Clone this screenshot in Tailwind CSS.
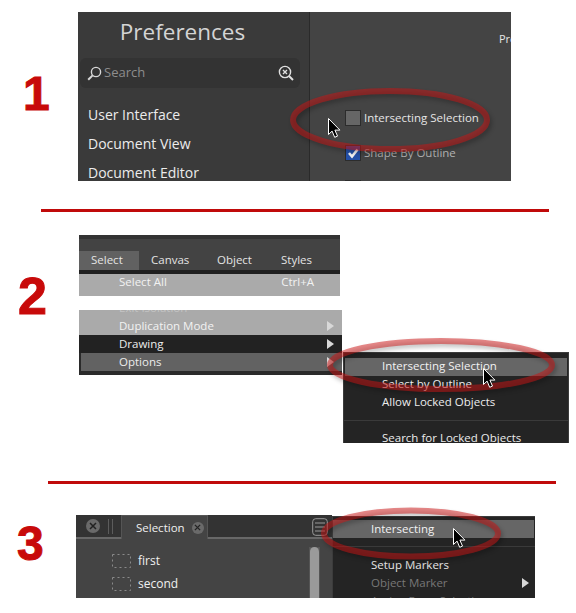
<!DOCTYPE html>
<html>
<head>
<meta charset="utf-8">
<script src="https://cdn.jsdelivr.net/npm/@tailwindcss/browser@4"></script>
</head>
<body class="bg-white">
<div class="relative w-[576px] h-[613px] overflow-hidden bg-white font-['Open_Sans','Noto_Sans',sans-serif]">

  <!-- Section 1 -->
  <section class="flex pt-[12px] h-[181px]">
    <div class="w-[78px] pt-[54px] pl-[23px] text-[#c80a0a] font-['Liberation_Sans',sans-serif] font-bold text-[48px] leading-[56px] [-webkit-text-stroke:1px_#c80a0a]">1</div>
    <div class="flex w-[433px] h-[169px] overflow-hidden bg-[#444444]">
      <div class="w-[232px] shrink-0 bg-[#3a3a3a] border-r border-[#2a2a2a] pl-[2px] pr-[9px]">
        <div class="h-[46px] flex items-start justify-center pt-[4px] pr-[15px] text-[22.5px] leading-[32px] text-[#d4d4d4]">Preferences</div>
        <div class="h-[30px] rounded-md bg-[#333333] flex items-center pl-[7px] pr-[6px]">
          <svg class="w-[15px] h-[15px] shrink-0" viewBox="0 0 15 15" fill="none" stroke="#d8d8d8" stroke-width="1.4"><circle cx="9" cy="6" r="4.6"/><path d="M5.6 9.4 1.2 13.8" stroke-width="2"/></svg>
          <span class="ml-[2px] text-[13px] text-[#8d8d8d]">Search</span>
          <svg class="ml-auto w-[16px] h-[16px]" viewBox="0 0 16 16" fill="none" stroke="#e0e0e0" stroke-width="1.4"><circle cx="7" cy="7" r="5.6"/><path d="M11 11 15 15" stroke-width="2"/><path d="M5 5 9 9M9 5 5 9"/></svg>
        </div>
        <ul class="mt-[12px] pl-[8px] text-[14px] text-[#ececec] leading-[29px]">
          <li>User Interface</li>
          <li>Document View</li>
          <li>Document Editor</li>
        </ul>
      </div>
      <div class="flex-1 relative pl-[35px] pt-[98px]">
        <div class="flex items-center gap-[3px] h-[16px] text-[11.5px] text-[#e6e6e6]">
          <span class="w-[16px] h-[16px] bg-[#666666] border border-[#2c2c2c]"></span>
          <span>Intersecting Selection</span>
        </div>
        <div class="flex items-center gap-[3px] h-[16px] mt-[19px] text-[11.5px] text-[#b5b5b5]">
          <span class="w-[16px] h-[16px] bg-[#2450a8] border border-[#2c2c2c] flex items-center justify-center">
            <svg class="w-[12px] h-[12px]" viewBox="0 0 12 12" fill="none" stroke="#f2f2f2" stroke-width="2.6"><path d="M2 6 5 9.5 10.5 2.5"/></svg>
          </span>
          <span>Shape By Outline</span>
        </div>
        <div class="w-[16px] h-[16px] mt-[19px] bg-[#333333] border border-[#2c2c2c]"></div>
        <span class="absolute left-[189px] top-[19px] text-[11px] text-[#e6e6e6] w-[12px] overflow-hidden">Pre</span>
      </div>
    </div>
  </section>

  <div class="ml-[41px] mt-[28px] w-[508px] h-[3px] bg-[#c00a0a]"></div>

  <!-- Section 2 -->
  <section class="flex mt-[23px] h-[140px]">
    <div class="w-[79px] pt-[31px] pl-[18px] text-[#c80a0a] font-['Liberation_Sans',sans-serif] font-bold text-[52px] leading-[60px] [-webkit-text-stroke:1px_#c80a0a]">2</div>
    <div class="w-[263px] text-[11.5px]">
      <div class="w-[261px] h-[61px] overflow-hidden bg-[#aaaaaa]">
        <div class="h-[4px] bg-[#333333]"></div>
        <div class="h-[12px] bg-[#434343]"></div>
        <div class="h-[19px] flex items-stretch bg-[#434343] text-[#e4e4e4]">
          <span class="w-[60px] bg-[#616161] pl-[12px] pb-[2px] flex items-center">Select</span>
          <span class="ml-[12px] w-[66px] pb-[2px] flex items-center">Canvas</span>
          <span class="w-[64px] pb-[2px] flex items-center">Object</span>
          <span class="pb-[2px] flex items-center">Styles</span>
        </div>
        <div class="h-[4px] bg-[#1f1f1f]"></div>
        <div class="flex justify-between pl-[40px] pr-[26px] h-[18px] pb-[2px] items-center text-[#f2f2f2]"><span>Select All</span><span>Ctrl+A</span></div>
        <div class="flex justify-between pl-[40px] pr-[25px] h-[18px] pb-[2px] items-center text-[#f2f2f2]"><span>Select All in Active Layer</span><span>Alt+Ctrl+A</span></div>
      </div>
      <div class="mt-[14px] w-[263px] h-[65px] bg-[#2a2a2a] overflow-hidden">
        <div class="h-[25px] bg-[#aaaaaa] overflow-hidden">
          <div class="-mt-[11px] h-[18px] pl-[40px] flex items-center text-[#c4c4c4]">Exit Isolation</div>
          <div class="h-[18px] pl-[40px] pr-[8px] flex justify-between items-center text-[#f2f2f2]"><span>Duplication Mode</span><svg class="w-[7px] h-[10px]" viewBox="0 0 7 10" fill="#d8d8d8"><path d="M0 0 7 5 0 10z"/></svg></div>
        </div>
        <div class="h-[18px] bg-[#222222] pl-[40px] pr-[8px] flex justify-between items-center text-[#ececec]"><span>Drawing</span><svg class="w-[7px] h-[10px]" viewBox="0 0 7 10" fill="#d8d8d8"><path d="M0 0 7 5 0 10z"/></svg></div>
        <div class="h-[18px] ml-[2px] bg-[#626262] pl-[38px] pr-[8px] flex justify-between items-center text-[#ececec]"><span>Options</span><svg class="w-[7px] h-[10px]" viewBox="0 0 7 10" fill="#d8d8d8"><path d="M0 0 7 5 0 10z"/></svg></div>
      </div>
    </div>
  </section>

  <div class="ml-[48px] mt-[106px] w-[508px] h-[3px] bg-[#c00a0a]"></div>

  <!-- Section 3 -->
  <section class="flex mt-[31px] h-[83px]">
    <div class="w-[76px] pt-[1px] pl-[17px] text-[#c80a0a] font-['Liberation_Sans',sans-serif] font-bold text-[48px] leading-[56px] [-webkit-text-stroke:1px_#c80a0a]">3</div>
    <div class="w-[256px] h-[83px] bg-[#444444] overflow-hidden text-[11.5px] text-[#f0f0f0]">
      <div class="h-[24px] bg-[#333333] border-b-2 border-[#686868] flex items-center relative">
        <span class="ml-[10px] w-[14px] h-[14px] rounded-full bg-[#6a6a6a] flex items-center justify-center">
          <svg class="w-[8px] h-[8px]" viewBox="0 0 8 8" stroke="#222" stroke-width="1.5"><path d="M1 1 7 7M7 1 1 7"/></svg>
        </span>
        <span class="ml-[8px] w-[1px] h-[15px] bg-[#5c5c5c]"></span>
        <span class="ml-[3px] w-[1px] h-[15px] bg-[#5c5c5c]"></span>
        <div class="absolute left-[45px] top-0 w-[87px] h-[24px] bg-[#444444] border-t border-x border-[#555555] pl-[14px] flex items-center gap-[7px] text-[12px]">
          <span class="text-[11.5px]">Selection</span>
          <span class="w-[12px] h-[12px] rounded-full bg-[#6a6a6a] flex items-center justify-center">
            <svg class="w-[7px] h-[7px]" viewBox="0 0 8 8" stroke="#222" stroke-width="1.5"><path d="M1 1 7 7M7 1 1 7"/></svg>
          </span>
        </div>
        <svg class="absolute left-[236px] top-[3px] w-[16px] h-[18px]" viewBox="0 0 16 18" fill="none" stroke="#9a9a9a"><rect x="0.7" y="0.7" width="14.6" height="16.6" rx="3"/><path d="M3 5h10M3 9h10M3 13h10"/></svg>
      </div>
      <div class="flex">
        <ul class="pl-[36px] pt-[10px] w-[233px] leading-[23px] text-[12px]">
          <li class="flex items-center gap-[7px]"><svg class="w-[19px] h-[14px]" viewBox="0 0 19 14" fill="none" stroke="#8a8a8a" stroke-dasharray="2 3"><rect x="0.5" y="0.5" width="18" height="13"/></svg>first</li>
          <li class="flex items-center gap-[7px]"><svg class="w-[19px] h-[14px]" viewBox="0 0 19 14" fill="none" stroke="#8a8a8a" stroke-dasharray="2 3"><rect x="0.5" y="0.5" width="18" height="13"/></svg>second</li>
        </ul>
        <div class="w-[11px] bg-[#555555] mt-[8px] h-[60px] flex justify-center">
          <span class="w-[9px] h-[60px] rounded-t-md bg-[#9a9a9a]"></span>
        </div>
      </div>
    </div>
    <div class="w-[203px] h-[82px] mt-[1px] bg-[#242424] border-l border-t border-[#3c3c3c] overflow-hidden text-[11.5px] text-[#e8e8e8]">
      <div class="mt-[3px] h-[18px] mr-[1px] bg-[#666666] pl-[38px] flex items-center text-[#f2f2f2]">Intersecting</div>
      <div class="mt-[8px] h-[1px] bg-[#3a3a3a]"></div>
      <div class="mt-[9px] h-[18px] pl-[38px] flex items-center">Setup Markers</div>
      <div class="h-[18px] pl-[38px] pr-[6px] flex justify-between items-center text-[#777777]"><span>Object Marker</span><svg class="w-[7px] h-[10px]" viewBox="0 0 7 10" fill="#d8d8d8"><path d="M0 0 7 5 0 10z"/></svg></div>
      <div class="h-[18px] pl-[38px] flex items-center text-[#777777]">Assign From Selection</div>
    </div>
  </section>

  <!-- Submenu popping out of panel 2 -->
  <div class="absolute left-[343px] top-[352px] w-[226px] h-[91px] bg-[#242424] border-l border-t border-r border-[#3c3c3c] overflow-hidden text-[11.5px] text-[#ececec]">
    <div class="mt-[5px] mx-[1px] h-[18px] pb-[2px] bg-[#666666] pl-[37px] flex items-center text-[#f2f2f2]">Intersecting Selection</div>
    <div class="h-[18px] pb-[2px] pl-[38px] flex items-center">Select by Outline</div>
    <div class="h-[18px] pb-[2px] pl-[38px] flex items-center">Allow Locked Objects</div>
    <div class="mt-[8px] h-[1px] bg-[#3a3a3a]"></div>
    <div class="mt-[9px] h-[18px] pb-[2px] pl-[38px] flex items-center">Search for Locked Objects</div>
  </div>

  <!-- Annotation ellipses and cursors -->
  <svg class="absolute inset-0 w-[576px] h-[613px] pointer-events-none" viewBox="0 0 576 613" fill="none">
    <g stroke="rgb(205,20,20)" stroke-opacity="0.5" stroke-width="6" class="drop-shadow-[2px_3px_2px_rgba(0,0,0,0.45)]">
      <ellipse cx="390" cy="120" rx="97" ry="29"/>
      <ellipse cx="441" cy="365" rx="111" ry="24"/>
      <ellipse cx="411" cy="533.5" rx="87" ry="23"/>
    </g>
    <g fill="#000" stroke="#fff" stroke-width="1">
      <path d="M328.5 118.5v16l3.6-3.4 2.6 6.2 2.8-1.2-2.6-6h5z"/>
      <path d="M483.5 368.5v16l3.6-3.4 2.6 6.2 2.8-1.2-2.6-6h5z"/>
      <path d="M453.5 528.5v16l3.6-3.4 2.6 6.2 2.8-1.2-2.6-6h5z"/>
    </g>
  </svg>
</div>
</body>
</html>
